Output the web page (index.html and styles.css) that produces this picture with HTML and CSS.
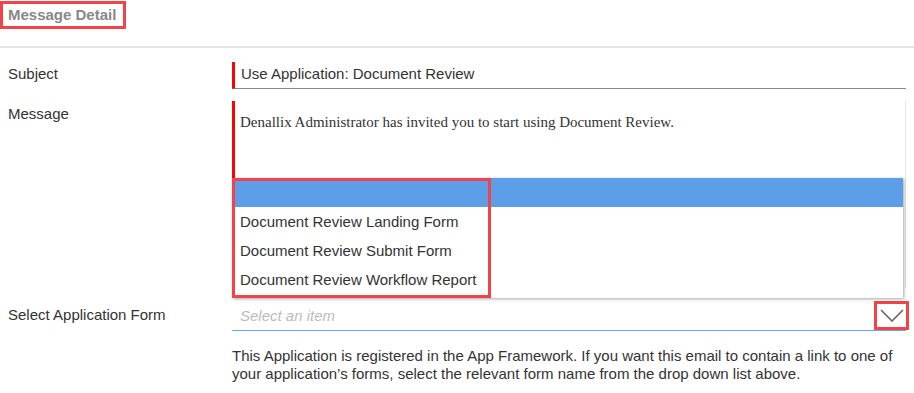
FILE: index.html
```html
<!DOCTYPE html>
<html lang="en">
<head>
    <meta charset="UTF-8">
    <meta name="viewport" content="width=device-width, initial-scale=1.0">
    <title>Message Detail</title>
    <link rel="stylesheet" href="styles.css">
</head>
<body>
    <div class="header">
        <h2 class="title">Message Detail</h2>
    </div>

    <div class="form">
        <div class="row row-center">
            <label class="label label-subject">Subject</label>
            <div class="field">
                <div class="text-input">Use Application: Document Review</div>
            </div>
        </div>

        <div class="row">
            <label class="label label-top">Message</label>
            <div class="field">
                <div class="textarea">Denallix Administrator has invited you to start using Document Review.</div>
            </div>
        </div>

        <div class="row">
            <label class="label label-select">Select Application Form</label>
            <div class="field">
                <div class="select">
                    <span class="placeholder">Select an item</span>
                    <span class="chevron">
                        <svg width="24" height="13" viewBox="0 0 24 13"><path d="M1 1 L12 12 L23 1" fill="none" stroke="#666" stroke-width="1.6"/></svg>
                    </span>

                    <!-- open drop down list -->
                    <ul class="popup">
                        <li class="item selected"></li>
                        <li class="item">Document Review Landing Form</li>
                        <li class="item">Document Review Submit Form</li>
                        <li class="item">Document Review Workflow Report</li>
                        <li class="mark"></li>
                    </ul>
                </div>
                <p class="help">This Application is registered in the App Framework. If you want this email to contain a link to one of your application’s forms, select the relevant form name from the drop down list above.</p>
            </div>
        </div>
    </div>
</body>
</html>
```

FILE: styles.css
```css
body {
    margin: 0;
    font-family: "Liberation Sans", Arial, sans-serif;
    font-size: 15px;
    color: #333;
    background: #fff;
}
.header {
    height: 46px;
    border-bottom: 2px solid #e6e6e6;
}
.title {
    display: inline-block;
    margin: 1px 0 0 0;
    padding: 0 7px 0 5px;
    border: 3px solid #f0434a;
    font-size: 15px;
    line-height: 22px;
    font-weight: bold;
    color: #888;
}
.form {
    padding: 14px 8px 0 8px;
}
.row {
    display: flex;
    margin-bottom: 12px;
}
.row-center {
    align-items: center;
}
.label {
    width: 224px;
    flex-shrink: 0;
    line-height: 18px;
}
.label-subject {
    padding-bottom: 3px;
}
.label-top {
    padding-top: 4px;
}
.label-select {
    padding-top: 6px;
}
.field {
    flex: 1;
}
.text-input {
    height: 26px;
    line-height: 24px;
    padding-left: 6px;
    border-left: 3px solid #f00;
    border-bottom: 1px solid #888;
}
.textarea {
    height: 187px;
    padding: 13px 0 0 5px;
    box-sizing: border-box;
    border-left: 3px solid #f00;
    border-right: 1px solid #e4e4e4;
    font-family: "Liberation Serif", "Times New Roman", serif;
    font-size: 15px;
}
.select {
    position: relative;
    height: 30px;
    border-bottom: 1px solid #64a8f0;
    display: flex;
    align-items: center;
    justify-content: space-between;
}
.placeholder {
    padding-left: 8px;
    font-style: italic;
    color: #bbb;
}
.chevron {
    position: relative;
    width: 29px;
    height: 23px;
    margin-right: -3px;
    border: 3px solid #f0434a;
    display: flex;
    align-items: center;
    justify-content: center;
}
.chevron svg {
    display: block;
}
.popup {
    position: absolute;
    left: 0;
    right: 3px;
    bottom: calc(100% + 2px);
    margin: 0;
    padding: 0 0 4px 0;
    list-style: none;
    background: #fff;
    box-shadow: 1px 1px 3px rgba(0, 0, 0, 0.35);
}
.item {
    height: 29px;
    line-height: 29px;
    padding-left: 8px;
}
.item.selected {
    background: #5c9ee8;
}
.mark {
    position: absolute;
    left: 0;
    top: 0;
    bottom: 0;
    width: 253px;
    border: 3px solid #f0434a;
}
.help {
    margin: 16px 0 0 0;
    line-height: 18px;
}
```
